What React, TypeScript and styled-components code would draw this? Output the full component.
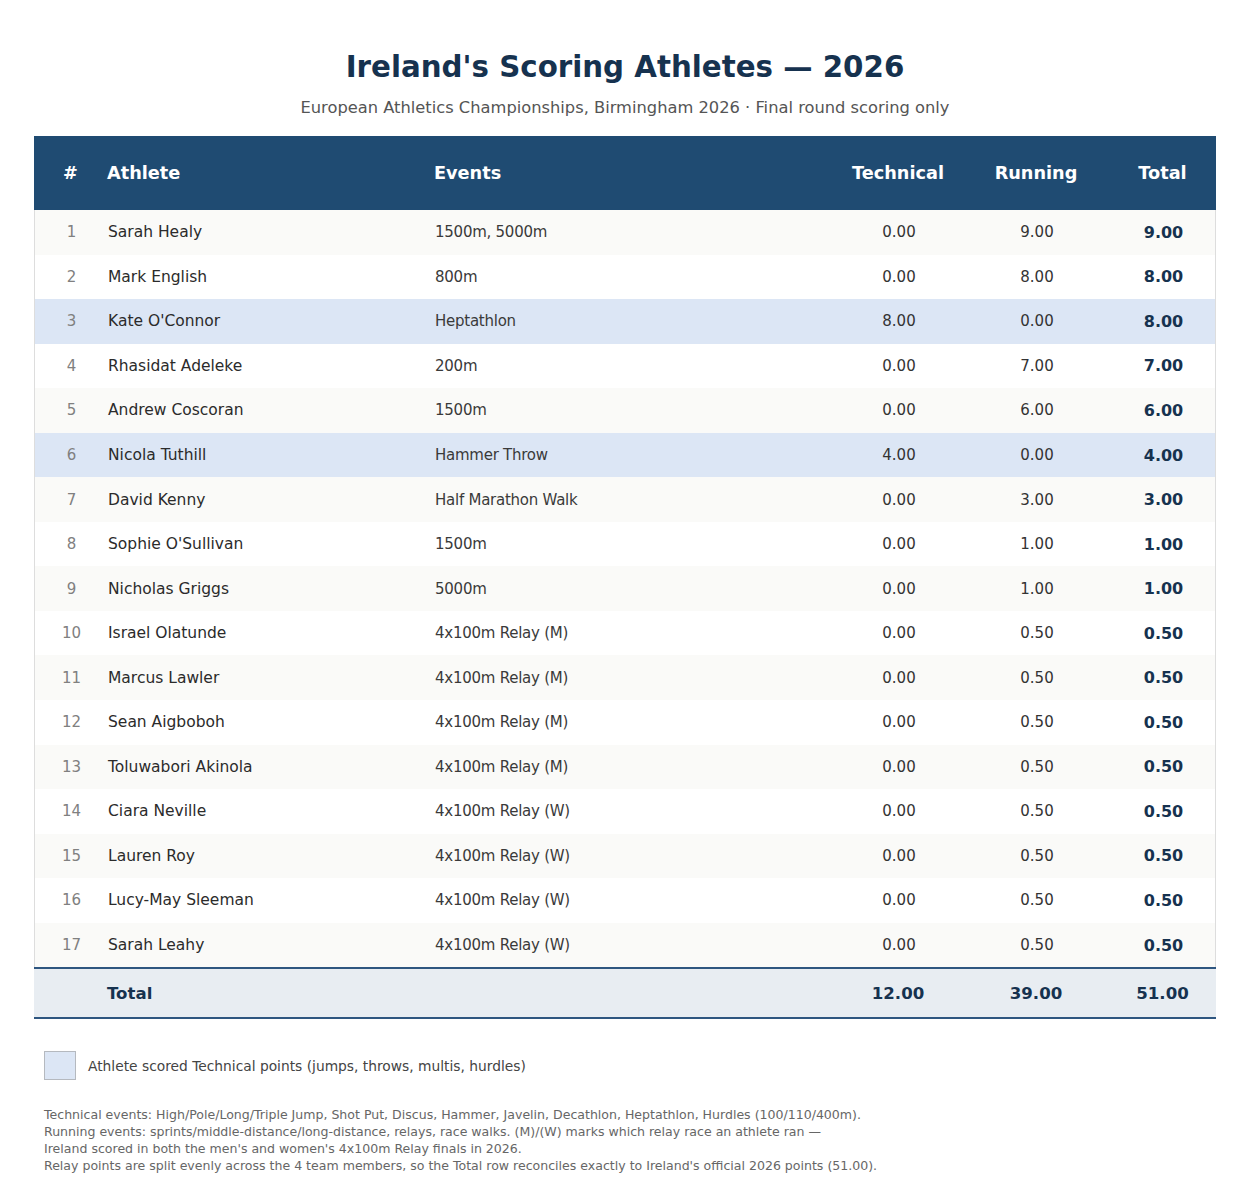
import styled, { createGlobalStyle } from 'styled-components';

const GlobalStyle = createGlobalStyle`
  body {
    margin: 0;
    background: #ffffff;
    font-family: 'DejaVu Sans', 'Liberation Sans', sans-serif;
  }
`;

const Page = styled.main`
  width: 1250px;
  padding-top: 49px;
  display: flex;
  flex-direction: column;
  align-items: center;
`;

const Title = styled.h1`
  margin: 0;
  font-size: 29.3px;
  line-height: 36px;
  font-weight: bold;
  color: #16324f;
`;

const Subtitle = styled.p`
  margin: 13px 0 0;
  font-size: 16.3px;
  line-height: 20px;
  color: #555555;
`;

const Table = styled.div`
  margin-top: 18px;
  width: 1182px;
  border-left: 1px solid #dddddd;
  border-right: 1px solid #dddddd;
  box-sizing: border-box;
`;

const Row = styled.div<{ $bg?: string; $height: number }>`
  display: grid;
  grid-template-columns: 73px 327px 395px 138px 138px 109px;
  align-items: center;
  height: ${(p) => p.$height}px;
  background: ${(p) => p.$bg || '#ffffff'};
`;

const HeaderRow = styled(Row)`
  margin: 0 -1px;
  color: #ffffff;
  font-weight: bold;
  font-size: 17.7px;
`;

const TotalRow = styled(Row)`
  margin: 0 -1px;
  border-top: 2px solid #2e5680;
  border-bottom: 2px solid #2e5680;
  box-sizing: border-box;
  font-weight: bold;
  font-size: 16.6px;
  color: #16324f;
`;

type Tone = 'num' | 'name' | 'event' | 'value' | 'bold';

const toneSize: Record<Tone, string> = {
  num: '15px',
  name: '15.5px',
  event: '15px',
  value: '15px',
  bold: '16px',
};

const toneColor: Record<Tone, string> = {
  num: '#808080',
  name: '#2b2b2b',
  event: '#3a3a3a',
  value: '#333333',
  bold: '#16324f',
};

const Cell = styled.div<{ $align?: 'left' | 'center'; $tone: Tone; $shift?: number }>`
  text-align: ${(p) => p.$align || 'left'};
  padding-left: ${(p) => p.$shift || 0}px;
  font-size: ${(p) => toneSize[p.$tone]};
  letter-spacing: ${(p) => (p.$tone === 'event' ? '-0.25px' : 'normal')};
  font-weight: ${(p) => (p.$tone === 'bold' ? 'bold' : 'normal')};
  color: ${(p) => toneColor[p.$tone]};
  white-space: nowrap;
`;

const HeadCell = styled.div<{ $align?: 'left' | 'center'; $shift?: number }>`
  text-align: ${(p) => p.$align || 'left'};
  padding-left: ${(p) => p.$shift || 0}px;
`;

const TotalCell = styled.div<{ $align?: 'left' | 'center'; $shift?: number }>`
  text-align: ${(p) => p.$align || 'left'};
  padding-left: ${(p) => p.$shift || 0}px;
`;

const Below = styled.section`
  width: 1182px;
  padding-left: 10px;
  box-sizing: border-box;
`;

const Legend = styled.div`
  margin-top: 32px;
  display: flex;
  align-items: center;
  gap: 12px;
  font-size: 13.8px;
  color: #444444;
`;

const Swatch = styled.span`
  width: 30px;
  height: 27px;
  background: #dce6f5;
  border: 1px solid #b5b9bf;
`;

const Notes = styled.p`
  margin: 26px 0 0;
  font-size: 12.55px;
  line-height: 17px;
  color: #666666;
`;

interface IAthlete {
  name: string;
  events: string;
  tech: number;
  run: number;
}

const athletes: IAthlete[] = [
  { name: 'Sarah Healy', events: '1500m, 5000m', tech: 0, run: 9 },
  { name: 'Mark English', events: '800m', tech: 0, run: 8 },
  { name: "Kate O'Connor", events: 'Heptathlon', tech: 8, run: 0 },
  { name: 'Rhasidat Adeleke', events: '200m', tech: 0, run: 7 },
  { name: 'Andrew Coscoran', events: '1500m', tech: 0, run: 6 },
  { name: 'Nicola Tuthill', events: 'Hammer Throw', tech: 4, run: 0 },
  { name: 'David Kenny', events: 'Half Marathon Walk', tech: 0, run: 3 },
  { name: "Sophie O'Sullivan", events: '1500m', tech: 0, run: 1 },
  { name: 'Nicholas Griggs', events: '5000m', tech: 0, run: 1 },
  { name: 'Israel Olatunde', events: '4x100m Relay (M)', tech: 0, run: 0.5 },
  { name: 'Marcus Lawler', events: '4x100m Relay (M)', tech: 0, run: 0.5 },
  { name: 'Sean Aigboboh', events: '4x100m Relay (M)', tech: 0, run: 0.5 },
  { name: 'Toluwabori Akinola', events: '4x100m Relay (M)', tech: 0, run: 0.5 },
  { name: 'Ciara Neville', events: '4x100m Relay (W)', tech: 0, run: 0.5 },
  { name: 'Lauren Roy', events: '4x100m Relay (W)', tech: 0, run: 0.5 },
  { name: 'Lucy-May Sleeman', events: '4x100m Relay (W)', tech: 0, run: 0.5 },
  { name: 'Sarah Leahy', events: '4x100m Relay (W)', tech: 0, run: 0.5 },
];

function rowColor(a: IAthlete, i: number) {
  if (a.tech > 0) return '#dce6f5';
  return i % 2 === 0 ? '#fafaf8' : '#ffffff';
}

export default function App() {
  const techSum = athletes.reduce((s, a) => s + a.tech, 0);
  const runSum = athletes.reduce((s, a) => s + a.run, 0);

  return (
    <Page>
      <GlobalStyle />
      <Title>Ireland's Scoring Athletes — 2026</Title>
      <Subtitle>European Athletics Championships, Birmingham 2026 · Final round scoring only</Subtitle>
      <Table>
        <HeaderRow $height={74} $bg="#1f4b72">
          <HeadCell $align="center">#</HeadCell>
          <HeadCell>Athlete</HeadCell>
          <HeadCell>Events</HeadCell>
          <HeadCell $align="center">Technical</HeadCell>
          <HeadCell $align="center">Running</HeadCell>
          <HeadCell $align="center" $shift={6}>Total</HeadCell>
        </HeaderRow>
        {athletes.map((a, i) => (
          <Row key={a.name} $height={44.56} $bg={rowColor(a, i)}>
            <Cell $align="center" $tone="num">{i + 1}</Cell>
            <Cell $tone="name">{a.name}</Cell>
            <Cell $tone="event">{a.events}</Cell>
            <Cell $align="center" $tone="value">{a.tech.toFixed(2)}</Cell>
            <Cell $align="center" $tone="value">{a.run.toFixed(2)}</Cell>
            <Cell $align="center" $tone="bold" $shift={6}>{(a.tech + a.run).toFixed(2)}</Cell>
          </Row>
        ))}
        <TotalRow $height={52} $bg="#e8edf2">
          <TotalCell />
          <TotalCell>Total</TotalCell>
          <TotalCell />
          <TotalCell $align="center">{techSum.toFixed(2)}</TotalCell>
          <TotalCell $align="center">{runSum.toFixed(2)}</TotalCell>
          <TotalCell $align="center" $shift={6}>{(techSum + runSum).toFixed(2)}</TotalCell>
        </TotalRow>
      </Table>
      <Below>
        <Legend>
          <Swatch />
          Athlete scored Technical points (jumps, throws, multis, hurdles)
        </Legend>
        <Notes>
          Technical events: High/Pole/Long/Triple Jump, Shot Put, Discus, Hammer, Javelin, Decathlon, Heptathlon, Hurdles (100/110/400m).
          <br />
          Running events: sprints/middle-distance/long-distance, relays, race walks. (M)/(W) marks which relay race an athlete ran —
          <br />
          Ireland scored in both the men's and women's 4x100m Relay finals in 2026.
          <br />
          Relay points are split evenly across the 4 team members, so the Total row reconciles exactly to Ireland's official 2026 points (51.00).
        </Notes>
      </Below>
    </Page>
  );
}
